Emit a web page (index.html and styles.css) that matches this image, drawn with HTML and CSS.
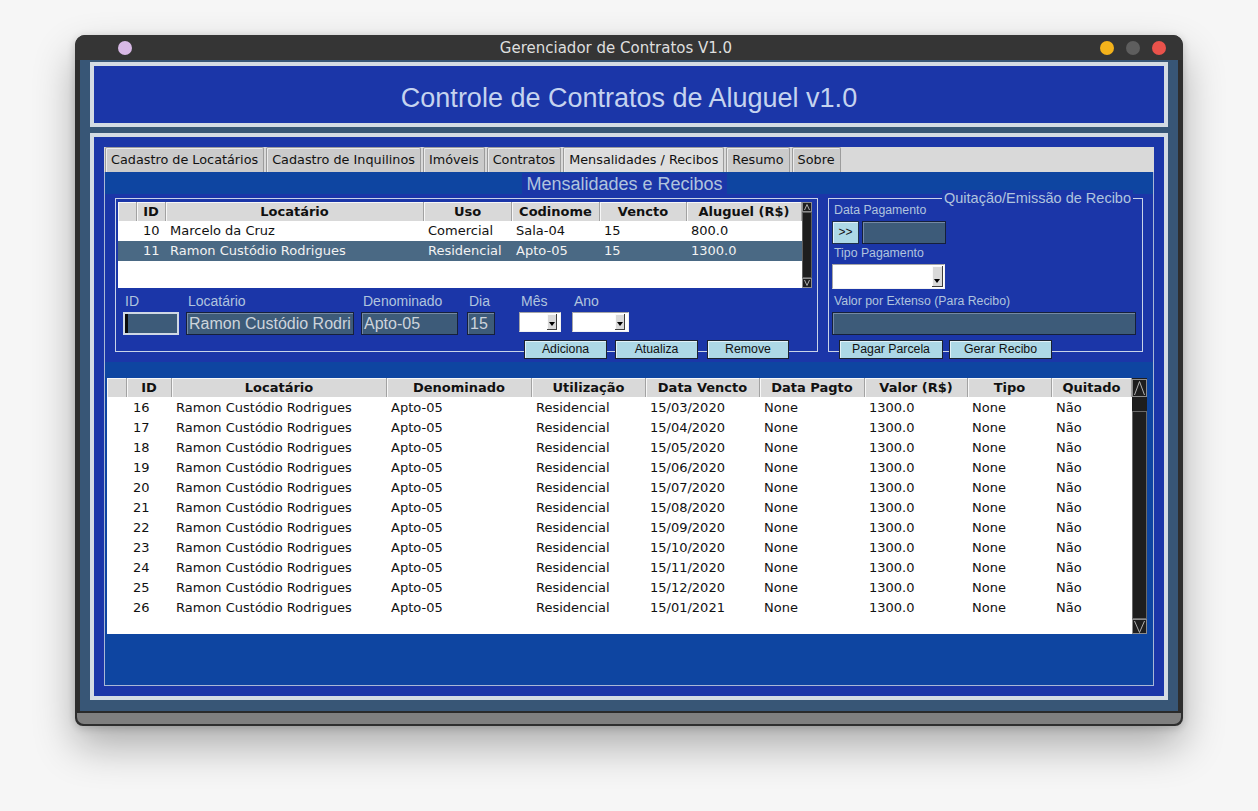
FILE: index.html
```html
<!DOCTYPE html>
<html lang="pt-BR">
<head>
<meta charset="utf-8">
<title>Gerenciador de Contratos V1.0</title>
<link rel="stylesheet" href="styles.css">
</head>
<body>
<div class="window">
  <div class="titlebar">
    <span class="dot dot-menu"></span>
    <span class="title">Gerenciador de Contratos V1.0</span>
    <span class="controls">
      <span class="dot dot-min"></span>
      <span class="dot dot-max"></span>
      <span class="dot dot-close"></span>
    </span>
  </div>
  <div class="client">
    <div class="header">Controle de Contratos de Aluguel v1.0</div>
    <div class="main">
      <div class="notebook">
        <div class="tabs">
          <span class="tab">Cadastro de Locatários</span>
          <span class="tab">Cadastro de Inquilinos</span>
          <span class="tab">Imóveis</span>
          <span class="tab">Contratos</span>
          <span class="tab tab-active">Mensalidades / Recibos</span>
          <span class="tab">Resumo</span>
          <span class="tab">Sobre</span>
        </div>
        <div class="pane">
          <div class="pane-title-row"><span class="pane-title">Mensalidades e Recibos</span></div>
          <div class="top-section">
            <div class="lframe lframe-left">
              <div class="tv tv-top">
                <div class="tv-main">
                  <div class="tv-head">
                    <span class="th"></span>
                    <span class="th">ID</span>
                    <span class="th">Locatário</span>
                    <span class="th">Uso</span>
                    <span class="th">Codinome</span>
                    <span class="th">Vencto</span>
                    <span class="th">Aluguel (R$)</span>
                  </div>
                  <div class="tv-body">
                    <div class="tr">
                      <span class="td"></span><span class="td td-id">10</span><span class="td">Marcelo da Cruz</span><span class="td">Comercial</span><span class="td">Sala-04</span><span class="td">15</span><span class="td">800.0</span>
                    </div>
                    <div class="tr tr-selected">
                      <span class="td"></span><span class="td td-id">11</span><span class="td">Ramon Custódio Rodrigues</span><span class="td">Residencial</span><span class="td">Apto-05</span><span class="td">15</span><span class="td">1300.0</span>
                    </div>
                  </div>
                </div>
                <svg class="sb sb-top" width="10" height="86" viewBox="0 0 10 86">
                  <rect width="10" height="86" fill="#1e1e1e"/>
                  <rect x="0.5" y="0.5" width="9" height="9" fill="none" stroke="#8c8c8c"/>
                  <polyline points="2.5,8 5,2.5 7.5,8" fill="none" stroke="#b0b0b0"/>
                  <rect x="0.5" y="10.5" width="9" height="65" fill="none" stroke="#5e5e5e"/>
                  <rect x="0.5" y="76.5" width="9" height="9" fill="none" stroke="#8c8c8c"/>
                  <polyline points="2.5,78 5,83.5 7.5,78" fill="none" stroke="#b0b0b0"/>
                </svg>
              </div>

              <div class="form-row">
                <div class="field f-id">
                  <span class="flabel">ID</span>
                  <span class="entry entry-focus"><span class="caret"></span></span>
                </div>
                <div class="field f-loc">
                  <span class="flabel">Locatário</span>
                  <span class="entry">Ramon Custódio Rodri</span>
                </div>
                <div class="field f-den">
                  <span class="flabel">Denominado</span>
                  <span class="entry">Apto-05</span>
                </div>
                <div class="field f-dia">
                  <span class="flabel">Dia</span>
                  <span class="entry">15</span>
                </div>
                <div class="field f-mes">
                  <span class="flabel">Mês</span>
                  <span class="combo"><span class="combo-arrow"></span></span>
                </div>
                <div class="field f-ano">
                  <span class="flabel">Ano</span>
                  <span class="combo"><span class="combo-arrow"></span></span>
                </div>
              </div>

              <div class="btn-row btn-row-left">
                <span class="btn b-add">Adiciona</span>
                <span class="btn b-upd">Atualiza</span>
                <span class="btn b-rem">Remove</span>
              </div>
            </div>

            <div class="lframe lframe-right">
              <span class="lf-title">Quitação/Emissão de Recibo</span>
              <span class="rlabel">Data Pagamento</span>
              <div class="date-row">
                <span class="btn btn-small">&gt;&gt;</span>
                <span class="entry entry-date"></span>
              </div>
              <span class="rlabel rlabel-tipo">Tipo Pagamento</span>
              <span class="combo combo-tipo"><span class="combo-arrow"></span></span>
              <span class="rlabel rlabel-valor">Valor por Extenso (Para Recibo)</span>
              <span class="entry entry-valor"></span>
              <div class="btn-row btn-row-right">
                <span class="btn b-pagar">Pagar Parcela</span>
                <span class="btn b-gerar">Gerar Recibo</span>
              </div>
            </div>
          </div>

          <div class="tv tv-bottom">
            <div class="tv-main">
              <div class="tv-head">
                <span class="th"></span>
                <span class="th">ID</span>
                <span class="th">Locatário</span>
                <span class="th">Denominado</span>
                <span class="th">Utilização</span>
                <span class="th">Data Vencto</span>
                <span class="th">Data Pagto</span>
                <span class="th">Valor (R$)</span>
                <span class="th">Tipo</span>
                <span class="th">Quitado</span>
              </div>
              <div class="tv-body">
                <div class="tr"><span class="td"></span><span class="td td-id">16</span><span class="td">Ramon Custódio Rodrigues</span><span class="td">Apto-05</span><span class="td">Residencial</span><span class="td">15/03/2020</span><span class="td">None</span><span class="td">1300.0</span><span class="td">None</span><span class="td">Não</span></div>
                <div class="tr"><span class="td"></span><span class="td td-id">17</span><span class="td">Ramon Custódio Rodrigues</span><span class="td">Apto-05</span><span class="td">Residencial</span><span class="td">15/04/2020</span><span class="td">None</span><span class="td">1300.0</span><span class="td">None</span><span class="td">Não</span></div>
                <div class="tr"><span class="td"></span><span class="td td-id">18</span><span class="td">Ramon Custódio Rodrigues</span><span class="td">Apto-05</span><span class="td">Residencial</span><span class="td">15/05/2020</span><span class="td">None</span><span class="td">1300.0</span><span class="td">None</span><span class="td">Não</span></div>
                <div class="tr"><span class="td"></span><span class="td td-id">19</span><span class="td">Ramon Custódio Rodrigues</span><span class="td">Apto-05</span><span class="td">Residencial</span><span class="td">15/06/2020</span><span class="td">None</span><span class="td">1300.0</span><span class="td">None</span><span class="td">Não</span></div>
                <div class="tr"><span class="td"></span><span class="td td-id">20</span><span class="td">Ramon Custódio Rodrigues</span><span class="td">Apto-05</span><span class="td">Residencial</span><span class="td">15/07/2020</span><span class="td">None</span><span class="td">1300.0</span><span class="td">None</span><span class="td">Não</span></div>
                <div class="tr"><span class="td"></span><span class="td td-id">21</span><span class="td">Ramon Custódio Rodrigues</span><span class="td">Apto-05</span><span class="td">Residencial</span><span class="td">15/08/2020</span><span class="td">None</span><span class="td">1300.0</span><span class="td">None</span><span class="td">Não</span></div>
                <div class="tr"><span class="td"></span><span class="td td-id">22</span><span class="td">Ramon Custódio Rodrigues</span><span class="td">Apto-05</span><span class="td">Residencial</span><span class="td">15/09/2020</span><span class="td">None</span><span class="td">1300.0</span><span class="td">None</span><span class="td">Não</span></div>
                <div class="tr"><span class="td"></span><span class="td td-id">23</span><span class="td">Ramon Custódio Rodrigues</span><span class="td">Apto-05</span><span class="td">Residencial</span><span class="td">15/10/2020</span><span class="td">None</span><span class="td">1300.0</span><span class="td">None</span><span class="td">Não</span></div>
                <div class="tr"><span class="td"></span><span class="td td-id">24</span><span class="td">Ramon Custódio Rodrigues</span><span class="td">Apto-05</span><span class="td">Residencial</span><span class="td">15/11/2020</span><span class="td">None</span><span class="td">1300.0</span><span class="td">None</span><span class="td">Não</span></div>
                <div class="tr"><span class="td"></span><span class="td td-id">25</span><span class="td">Ramon Custódio Rodrigues</span><span class="td">Apto-05</span><span class="td">Residencial</span><span class="td">15/12/2020</span><span class="td">None</span><span class="td">1300.0</span><span class="td">None</span><span class="td">Não</span></div>
                <div class="tr"><span class="td"></span><span class="td td-id">26</span><span class="td">Ramon Custódio Rodrigues</span><span class="td">Apto-05</span><span class="td">Residencial</span><span class="td">15/01/2021</span><span class="td">None</span><span class="td">1300.0</span><span class="td">None</span><span class="td">Não</span></div>
              </div>
            </div>
            <svg class="sb sb-bottom" width="15" height="256" viewBox="0 0 15 256">
              <rect width="15" height="256" fill="#1e1e1e"/>
              <rect x="0.5" y="1.5" width="14" height="17" fill="none" stroke="#8c8c8c"/>
              <polyline points="2.5,17 7.5,3.5 12.5,17" fill="none" stroke="#b0b0b0"/>
              <rect x="0.5" y="33.5" width="14" height="207" fill="none" stroke="#6a6a6a"/>
              <rect x="0.5" y="241.5" width="14" height="14" fill="none" stroke="#8c8c8c"/>
              <polyline points="2.5,243 7.5,254.5 12.5,243" fill="none" stroke="#b0b0b0"/>
            </svg>
          </div>
        </div>
      </div>
    </div>
  </div>
  <div class="bottombar"></div>
</div>
</body>
</html>
```

FILE: styles.css
```css
html, body {
  margin: 0;
  padding: 0;
}
body {
  width: 1258px;
  height: 811px;
  overflow: hidden;
  background: #f6f6f6;
  font-family: "DejaVu Sans", sans-serif;
}

/* ---------- window chrome ---------- */
.window {
  margin: 35px 0 0 75px;
  width: 1108px;
  box-sizing: border-box;
  padding: 0 5px 2px;
  background: #2e2e2e;
  border-radius: 10px 10px 8px 8px;
  box-shadow: 0 20px 42px rgba(0, 0, 0, 0.30), 0 2px 8px rgba(0, 0, 0, 0.18);
}
.titlebar {
  height: 25px;
  margin: 0 -5px;
  padding: 0 17px 0 43px;
  display: flex;
  align-items: center;
  background: #353535;
  border-radius: 10px 10px 0 0;
}
.dot {
  display: block;
  width: 14px;
  height: 14px;
  border-radius: 50%;
}
.dot-menu { background: #d8b9e6; }
.dot-min { background: #f3b21b; }
.dot-max { background: #5e5e5e; }
.dot-close { background: #e9524b; }
.title {
  flex: 1;
  text-align: center;
  font-family: "DejaVu Sans", sans-serif;
  font-size: 15px;
  color: #dedede;
  white-space: nowrap;
}
.controls {
  display: flex;
  gap: 12px;
}

.client {
  background: #385676;
  padding: 2px 10px 11px;
}
.header {
  height: 49px;
  padding-top: 8px;
  border: 4px solid #d4dbe3;
  background: #1b36a8;
  display: flex;
  align-items: center;
  justify-content: center;
  font-family: "Liberation Sans", Arial, sans-serif;
  font-size: 27px;
  color: #c5d3ef;
}
.main {
  margin-top: 6px;
  border: 4px solid #d4dbe3;
  background: #1b36a8;
  padding: 10px;
}
.bottombar {
  margin: 0 -3px;
  height: 11px;
  border-top: 2px solid #2a2a2a;
  background: #7f7f7f;
  border-radius: 0 0 7px 7px;
}

/* ---------- notebook ---------- */
.notebook {
  height: 539px;
  display: flex;
  flex-direction: column;
}
.tabs {
  height: 25px;
  flex: none;
  display: flex;
  background: #d9d9d9;
  padding-left: 1px;
}
.tab {
  box-sizing: border-box;
  height: 25px;
  padding: 0 5px;
  margin-right: 2px;
  line-height: 24px;
  font-size: 12.8px;
  color: #111;
  white-space: nowrap;
  background: #cbcbcb;
  border: 1px solid #9c9c9c;
  border-bottom: none;
  border-radius: 2px 2px 0 0;
  box-shadow: inset 1px 1px 0 #ececec;
}
.tab-active {
  background: #dedede;
}
.pane {
  flex: 1;
  background: #0e45a1;
  border: 1px solid #a9b8d6;
  border-top: none;
}
.pane-title-row {
  height: 22px;
  text-align: center;
  padding-right: 9px;
}
.pane-title {
  display: inline-block;
  box-sizing: border-box;
  margin-top: 1px;
  height: 21px;
  padding: 2px 4px 0;
  line-height: 19px;
  background: #1b36a8;
  color: #b0c4de;
  font-family: "Liberation Sans", Arial, sans-serif;
  font-size: 18px;
}

/* ---------- top section ---------- */
.top-section {
  height: 168px;
  box-sizing: border-box;
  background: #1b36a8;
  display: flex;
  align-items: flex-start;
  padding: 4px 0 0 10px;
}
.lframe {
  position: relative;
  border: 1px solid #c9d3e8;
}
.lframe-left {
  width: 694px;
  padding: 3px 5px 0 2px;
}
.lframe-right {
  width: 304px;
  margin-left: 10px;
  padding: 3px 6px 0 3px;
  display: flex;
  flex-direction: column;
  align-items: flex-start;
}
.lf-title {
  position: absolute;
  top: -9px;
  right: 9px;
  padding: 0 2px;
  line-height: 17px;
  background: #1b36a8;
  color: #b0c4de;
  font-family: "Liberation Sans", Arial, sans-serif;
  font-size: 14.5px;
  white-space: nowrap;
}

/* ---------- treeviews ---------- */
.tv {
  display: flex;
}
.tv-main {
  flex: 1;
  background: #fff;
  display: flex;
  flex-direction: column;
}
.tv-head,
.tr {
  display: grid;
}
.tv-top .tv-head,
.tv-top .tr {
  grid-template-columns: 19px 29px 258px 88px 88px 87px 115px;
}
.tv-bottom .tv-head,
.tv-bottom .tr {
  grid-template-columns: 20px 45px 215px 145px 114px 114px 105px 103px 84px 80px;
}
.tv-top { height: 86px; }
.tv-bottom {
  height: 256px;
  width: 1040px;
  margin: 16px 0 0 2px;
}
.th {
  box-sizing: border-box;
  height: 19px;
  line-height: 19px;
  text-align: center;
  font-weight: bold;
  font-size: 13px;
  color: #111;
  background: #d9d9d9;
  border-right: 1px solid #a2a2a2;
  box-shadow: inset 1px 1px 0 #f7f7f7;
  white-space: nowrap;
  overflow: hidden;
}
.tr {
  height: 20px;
  line-height: 20px;
  font-size: 13px;
  color: #111;
}
.tv-bottom .tr {
  line-height: 21px;
}
.td {
  padding-left: 4px;
  white-space: nowrap;
  overflow: hidden;
}
.td-id { padding-left: 6px; }
.tr-selected {
  background: #4a6984;
  color: #f2f2f2;
}
.sb {
  display: block;
  flex: none;
}

/* ---------- form widgets ---------- */
.form-row {
  display: flex;
  align-items: flex-start;
  margin-top: 5px;
}
.field {
  display: flex;
  flex-direction: column;
}
.flabel {
  height: 16px;
  line-height: 16px;
  padding-left: 2px;
  margin-bottom: 3px;
  font-family: "Liberation Sans", Arial, sans-serif;
  font-size: 14px;
  color: #b0c4de;
  white-space: nowrap;
}
.f-id { margin-left: 5px; width: 56px; }
.f-loc { margin-left: 7px; width: 168px; }
.f-den { margin-left: 7px; width: 97px; }
.f-dia { margin-left: 9px; width: 28px; }
.f-mes { margin-left: 24px; width: 42px; }
.f-ano { margin-left: 11px; width: 57px; }

.entry {
  display: block;
  box-sizing: border-box;
  height: 23px;
  padding-left: 2px;
  background: #3d5b79;
  border: 1px solid #16203a;
  box-shadow: inset 1px 1px 0 #7489a3;
  font-family: "Liberation Sans", Arial, sans-serif;
  font-size: 16px;
  line-height: 21px;
  color: #cdd4dc;
  white-space: nowrap;
  overflow: hidden;
}
.entry-focus {
  border: 2px solid #d0d8e4;
  box-shadow: none;
  padding: 0;
}
.caret {
  display: block;
  width: 3px;
  height: 19px;
  background: #0a0a0a;
}
.combo {
  display: flex;
  justify-content: flex-end;
  box-sizing: border-box;
  height: 20px;
  padding: 1px 3px 1px 0;
  background: #fff;
  border: 1px solid #a6a6a6;
  border-right-color: #f2f2f2;
  border-bottom-color: #f2f2f2;
}
.combo-arrow {
  box-sizing: border-box;
  width: 10px;
  background: #d9d9d9;
  border-right: 1px solid #3e3e3e;
  border-bottom: 1px solid #3e3e3e;
  box-shadow: inset 1px 1px 0 #fafafa;
  display: flex;
  align-items: flex-end;
  justify-content: center;
  padding-bottom: 3px;
}
.combo-arrow::after {
  content: "";
  display: block;
  border-left: 3px solid transparent;
  border-right: 3px solid transparent;
  border-top: 4px solid #000;
}

.btn {
  display: block;
  box-sizing: border-box;
  height: 19px;
  line-height: 17px;
  text-align: center;
  background: #add8e6;
  border: 1px solid #1b2230;
  box-shadow: inset 1px 1px 0 #e2f2f8;
  font-family: "Liberation Sans", Arial, sans-serif;
  font-size: 12.3px;
  color: #111;
  white-space: nowrap;
}
.btn-row {
  display: flex;
  margin-top: 5px;
  margin-bottom: -8px;
}
.btn-row-left {
  padding-left: 406px;
}
.b-add { width: 83px; }
.b-upd { width: 83px; margin-left: 8px; }
.b-rem { width: 82px; margin-left: 9px; }

.rlabel {
  height: 15px;
  line-height: 16px;
  padding-left: 2px;
  font-family: "Liberation Sans", Arial, sans-serif;
  font-size: 12.3px;
  color: #b0c4de;
  white-space: nowrap;
}
.date-row {
  display: flex;
  margin-top: 4px;
}
.btn-small {
  width: 27px;
  height: 23px;
  line-height: 20px;
  font-size: 12px;
  border-color: #20304a;
}
.entry-date {
  width: 84px;
  margin-left: 3px;
}
.rlabel-tipo { margin-top: 1px; }
.combo-tipo {
  margin-top: 4px;
  width: 113px;
  height: 25px;
  padding: 1px 1px 1px 0;
}
.combo-tipo .combo-arrow { width: 11px; }
.rlabel-valor { margin-top: 4px; }
.entry-valor {
  margin-top: 4px;
  width: 304px;
}
.btn-row-right {
  padding-left: 7px;
}
.b-pagar { width: 104px; }
.b-gerar { width: 103px; margin-left: 6px; }
```
